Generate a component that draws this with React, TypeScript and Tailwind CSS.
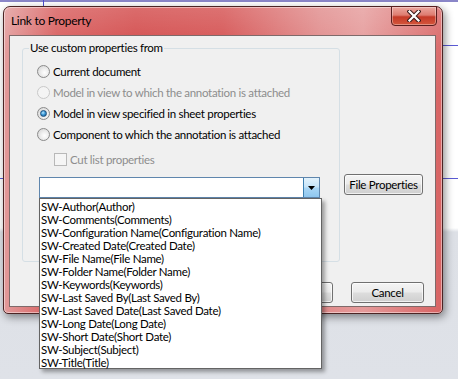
import React from "react";

const items = [
  "SW-Author(Author)",
  "SW-Comments(Comments)",
  "SW-Configuration Name(Configuration Name)",
  "SW-Created Date(Created Date)",
  "SW-File Name(File Name)",
  "SW-Folder Name(Folder Name)",
  "SW-Keywords(Keywords)",
  "SW-Last Saved By(Last Saved By)",
  "SW-Last Saved Date(Last Saved Date)",
  "SW-Long Date(Long Date)",
  "SW-Short Date(Short Date)",
  "SW-Subject(Subject)",
  "SW-Title(Title)",
];

function Radio({ checked, disabled }: { checked?: boolean; disabled?: boolean }) {
  return (
    <span
      className={
        "relative flex h-[13px] w-[13px] shrink-0 items-center justify-center rounded-full border " +
        (disabled
          ? "border-[#c9c9c9] bg-[#f4f4f4]"
          : "border-[#8a8a8a] bg-[radial-gradient(circle_at_60%_60%,#ffffff_0%,#f0f0f0_35%,#cfcfcf_100%)]")
      }
    >
      {checked && (
        <span className="h-[7px] w-[7px] rounded-full border border-[#1d4f7c] bg-[radial-gradient(circle_at_40%_35%,#b9e6ff_0%,#3c9ad8_45%,#0f4f88_100%)]" />
      )}
    </span>
  );
}

function WinButton({ children, className = "" }: { children?: React.ReactNode; className?: string }) {
  return (
    <div
      className={
        "flex h-[21px] items-center justify-center rounded-[3px] border border-[#707070] bg-[linear-gradient(180deg,#f4f4f4_0%,#ebebeb_48%,#dddddd_52%,#cfcfcf_100%)] shadow-[inset_0_0_0_1px_rgba(255,255,255,0.7)] text-[11.5px] leading-[14px] text-black " +
        className
      }
    >
      {children}
    </div>
  );
}

export default function App() {
  return (
    <div className="relative h-[379px] w-[458px] overflow-hidden bg-[linear-gradient(180deg,#ffffff_0px,#ffffff_228px,#dde0e6_232px,#dfe2e8_379px)] font-['Lato',sans-serif] tracking-[-0.3px]">
      <svg className="absolute left-0 top-0" width="458" height="379">
        <line x1="0" y1="1" x2="458" y2="1" stroke="#8a86c8" strokeWidth="2" />
        <line x1="43.5" y1="0" x2="43.5" y2="10" stroke="#4d4dd0" strokeWidth="1" />
        <line x1="440" y1="45.5" x2="458" y2="45.5" stroke="#5a5ad4" strokeWidth="1" />
        <line x1="0" y1="178.5" x2="10" y2="178.5" stroke="#5a5ad4" strokeWidth="1" />
        <line x1="440" y1="178.5" x2="458" y2="178.5" stroke="#5a5ad4" strokeWidth="1" />
      </svg>

      {/* Window */}
      <div className="absolute left-[3px] top-[6px] flex h-[308px] w-[440px] flex-col rounded-t-[7px] rounded-b-[5px] border border-[#4b2424] bg-[linear-gradient(180deg,rgba(255,255,255,0.2)_0px,rgba(255,255,255,0.05)_40px,rgba(255,255,255,0)_90px),linear-gradient(90deg,#e29a9a_0%,#d75a5a_12%,#d24848_30%,#d44f4f_50%,#e08a8a_72%,#e59a9a_82%,#d86464_100%)] shadow-[inset_0_0_0_1px_rgba(255,255,255,0.45),2px_3px_8px_rgba(0,0,0,0.45)]">
        {/* Title bar */}
        <div className="flex h-[28px] shrink-0 items-start">
          <div className="pl-[7px] pt-[6px] text-[12px] leading-[16px] text-black">Link to Property</div>
          <div className="ml-auto mr-[5px] -mt-[1px] flex h-[20px] w-[46px] items-center justify-center rounded-b-[4px] border border-[#5a1e1e] bg-[linear-gradient(180deg,#eba79f_0%,#de7c70_45%,#c53a28_55%,#d4563c_100%)] shadow-[inset_0_0_0_1px_rgba(255,255,255,0.35)]">
            <svg width="14" height="12" viewBox="0 0 14 12">
              <path d="M2.5 1.5 L11.5 10.5 M11.5 1.5 L2.5 10.5" stroke="#3a1a1a" strokeWidth="4.2" strokeLinecap="square" />
              <path d="M2.5 1.5 L11.5 10.5 M11.5 1.5 L2.5 10.5" stroke="#ffffff" strokeWidth="2.2" strokeLinecap="square" />
            </svg>
          </div>
        </div>

        {/* Client area */}
        <div className="ml-[5px] flex h-[272px] w-[427px] flex-col border border-[#7e6a6a] bg-[#f0f0f0]">
          <div className="flex items-start">
            <fieldset className="ml-[12px] mt-[4px] h-[222px] w-[318px] rounded-[3px] border border-[#d5dfe5]">
              <legend className="ml-[6px] px-[1px] text-[11.5px] leading-[16px] text-black">Use custom properties from</legend>
              <div className="mt-[5px] flex flex-col">
                <div className="flex h-[21px] items-center pl-[14px]">
                  <Radio />
                  <span className="ml-[3px] text-[11.5px] text-black">Current document</span>
                </div>
                <div className="flex h-[21px] items-center pl-[14px]">
                  <Radio disabled />
                  <span className="ml-[3px] text-[11.5px] text-[#8d8d8d]">Model in view to which the annotation is attached</span>
                </div>
                <div className="flex h-[21px] items-center pl-[14px]">
                  <Radio checked />
                  <span className="ml-[3px] text-[11.5px] text-black">Model in view specified in sheet properties</span>
                </div>
                <div className="flex h-[21px] items-center pl-[14px]">
                  <Radio />
                  <span className="ml-[3px] text-[11.5px] text-black">Component to which the annotation is attached</span>
                </div>
                <div className="mt-[4px] flex h-[21px] items-center pl-[31px]">
                  <span className="h-[13px] w-[13px] border border-[#b8b8b8] bg-[#f5f5f5]" />
                  <span className="ml-[3px] text-[11.5px] text-[#8d8d8d]">Cut list properties</span>
                </div>
                <div className="relative ml-[16px] mt-[7px] flex h-[21px] w-[281px] border border-[#5f86ad] bg-white">
                  <div className="flex-1" />
                  <div className="flex w-[16px] items-center justify-center border-l border-[#3c7fb1] bg-[linear-gradient(180deg,#e3f2fc_0%,#c5e4f9_48%,#a9d6f5_52%,#8fc7ef_100%)]">
                    <svg width="7" height="4" viewBox="0 0 7 4">
                      <path d="M0 0 L7 0 L3.5 4 Z" fill="#000" />
                    </svg>
                  </div>
                  {/* Dropdown list */}
                  <div className="absolute left-[-1px] top-[20px] z-10 flex h-[171px] w-[283px] flex-col border border-[#646464] bg-white py-[1px] shadow-[3px_3px_4px_rgba(0,0,0,0.35)]">
                    {items.map((t) => (
                      <div key={t} className="h-[13px] overflow-visible whitespace-nowrap pl-[1px] text-[11.5px] leading-[13px] text-black">
                        {t}
                      </div>
                    ))}
                  </div>
                </div>
              </div>
            </fieldset>
            <WinButton className="ml-[4px] mt-[138px] w-[79px]">File Properties</WinButton>
          </div>
          <div className="mr-[11px] mt-[20px] flex justify-end gap-[18px]">
            <WinButton className="w-[74px] border-[#3c7fb1] shadow-[inset_0_0_0_1px_#8fd2f7]">OK</WinButton>
            <WinButton className="w-[73px]">Cancel</WinButton>
          </div>
        </div>
      </div>
    </div>
  );
}
